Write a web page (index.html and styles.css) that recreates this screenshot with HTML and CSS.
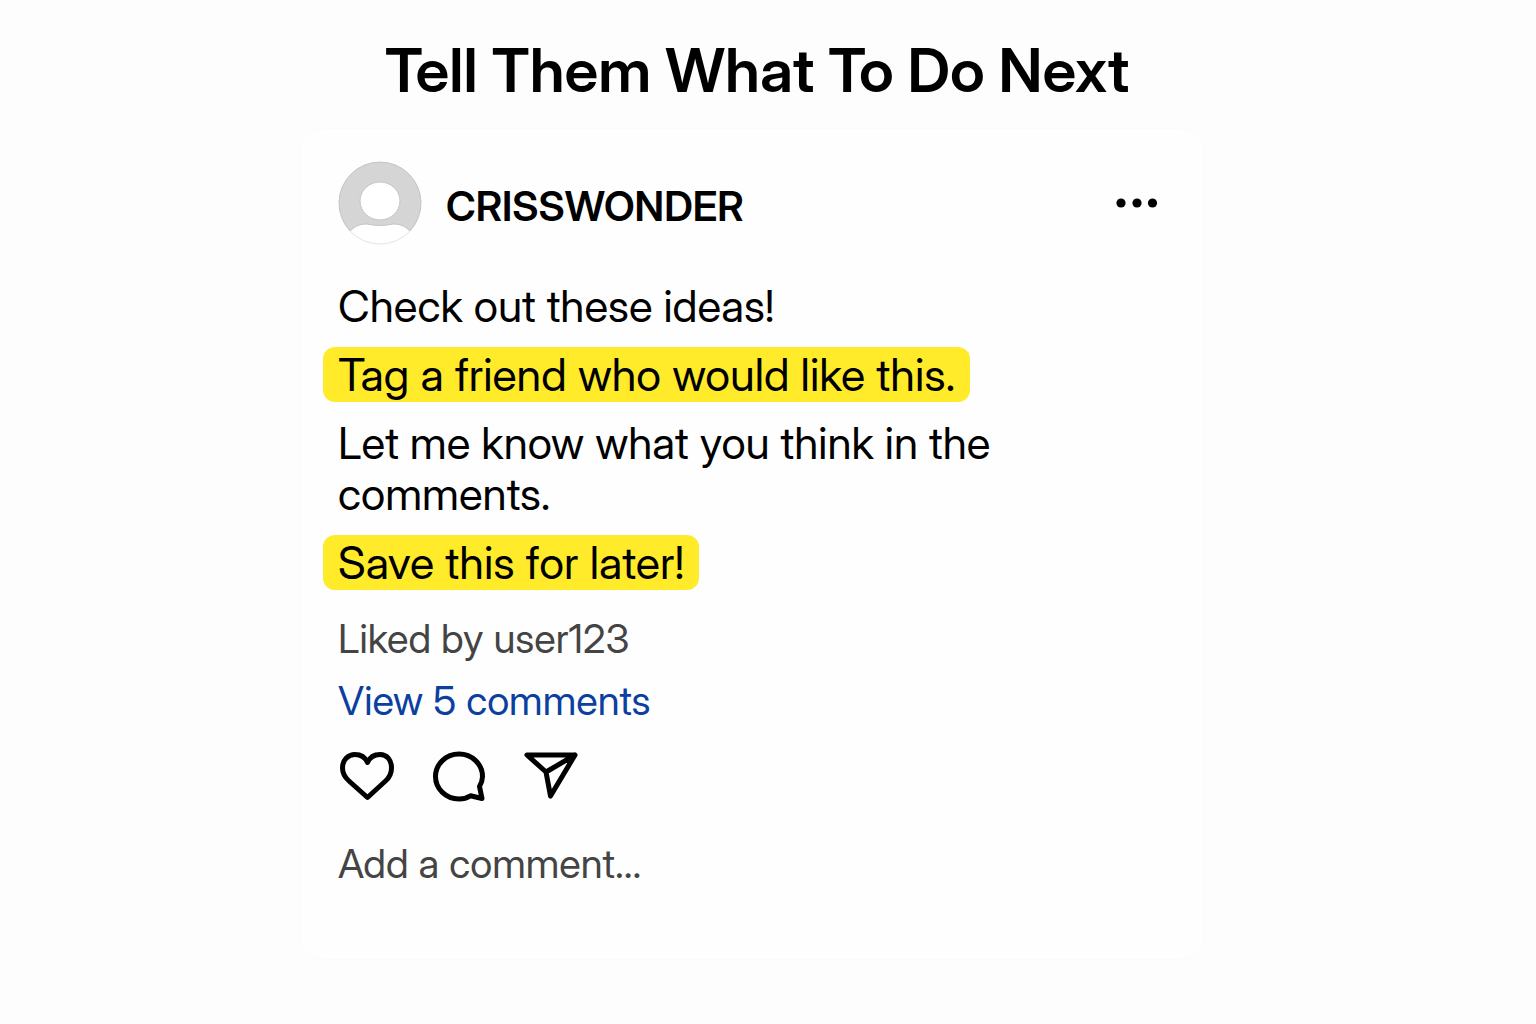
FILE: index.html
```html
<!DOCTYPE html>
<html lang="en">
<head>
<meta charset="utf-8">
<meta name="viewport" content="width=device-width, initial-scale=1">
<title>Tell Them What To Do Next</title>
<link rel="stylesheet" href="styles.css">
</head>
<body>
<main class="page">
  <h1 class="title">Tell Them What To Do Next</h1>
  <article class="post">
    <header class="post-header">
      <svg class="avatar" viewBox="0 0 84 84" aria-hidden="true">
        <defs><clipPath id="disc"><circle cx="42" cy="42" r="41"/></clipPath></defs>
        <circle cx="42" cy="42" r="41" fill="#d5d5d5"/>
        <g clip-path="url(#disc)" fill="#fff" stroke="#c4c4c4">
          <ellipse cx="42" cy="40" rx="20" ry="19"/>
          <path d="M8 76C14 66 20 63 29 63C38 65 46 65 55 63C64 63 70 66 76 76V86H8Z"/>
        </g>
        <path d="M12 70A41 41 0 1 1 72 70" fill="none" stroke="#c4c4c4"/>
        <path d="M12 70A41 41 0 0 0 72 70" fill="none" stroke="#e6e6e6"/>
      </svg>
      <h2 class="username">CRISSWONDER</h2>
      <button class="icon-button more" type="button" aria-label="More options">
        <svg width="42" height="12" viewBox="0 0 42 12"><circle cx="5" cy="6" r="4.600"/><circle cx="21" cy="6" r="4.600"/><circle cx="36.500" cy="6" r="4.600"/></svg>
      </button>
    </header>
    <div class="caption">
      <p>Check out these ideas!</p>
      <p><mark class="highlight">Tag a friend who would like this.</mark></p>
      <p>Let me know what you think in the comments.</p>
      <p><mark class="highlight">Save this for later!</mark></p>
    </div>
    <div class="meta">
      <p class="likes">Liked by user123</p>
      <a class="comments-link" href="#comment">View 5 comments</a>
    </div>
    <div class="actions">
      <button class="icon-button" type="button" aria-label="Like">
        <svg width="56" height="52" viewBox="0 0 56 52"><path d="M29.500 47.500L11 31C6.500 27 4.500 23 4.500 18C4.500 10 10 4.500 17 4.500C23 4.500 27.500 8 29.500 12.500C31.500 8 36 4.500 42 4.500C49 4.500 53.500 10 53.500 18C53.500 23 52 27 47.500 31Z"/></svg>
      </button>
      <button class="icon-button" type="button" aria-label="Comment">
        <svg width="56" height="52" viewBox="0 0 56 52"><path d="M49.500 36.500C51.500 33 52.500 30 52.500 26.500A23.500 22.500 0 1 0 29 49C33.500 49 37 48 40.500 45.800L52 48.500Z"/></svg>
      </button>
      <button class="icon-button" type="button" aria-label="Share">
        <svg width="56" height="52" viewBox="0 0 56 52"><path d="M5 5H53L28.500 46L24 22ZM24 22L53 5"/></svg>
      </button>
    </div>
    <input class="comment-input" id="comment" type="text" placeholder="Add a comment..." aria-label="Add a comment">
  </article>
</main>
</body>
</html>
```

FILE: styles.css
```css
* { box-sizing: border-box; }
body { margin: 0; background: #fdfdfd; color: #000; font-family: "Inter Display", Inter, "Liberation Sans", sans-serif; }
h1, h2, p { margin: 0; }
.page { display: flex; flex-direction: column; align-items: center; padding: 34px 24px 68px; }
.title { font-size: 61px; line-height: 72px; font-weight: 600; margin: 0 22px 22px 0; }
.post { width: 100%; max-width: 906px; margin-right: 32px; padding: 32px 46px 72px 38px; background: #fefefe; border: 1px solid #fbfbfb; border-radius: 24px; }
.post-header { display: flex; align-items: center; gap: 24px; }
.avatar { width: 84px; height: 84px; }
.username { font-size: 41px; line-height: 48px; font-weight: 600; padding-top: 6px; }
.icon-button { display: flex; padding: 0; border: 0; background: none; cursor: pointer; }
.more { margin-left: auto; }
.caption { display: flex; flex-direction: column; gap: 17px; max-width: 680px; margin-top: 36px; font-size: 44px; line-height: 51px; }
.highlight { display: inline-block; margin: -2px -15px; padding: 2px 15px; border-radius: 12px; background: #ffeb29; color: inherit; font-size: 45px; }
.meta { font-size: 40px; line-height: 46px; margin-top: 27px; }
.likes { color: #444; }
.comments-link { display: inline-block; margin-top: 16px; color: #0b3fa0; text-decoration: none; }
.actions { display: flex; gap: 36px; margin-top: 26px; }
.actions path { fill: none; stroke: #000; stroke-width: 5; stroke-linejoin: round; stroke-linecap: round; }
.comment-input { width: 100%; height: 48px; margin-top: 37px; padding: 0; border: 0; background: none; font: inherit; font-size: 40px; color: #444; }
.comment-input::placeholder { color: #444; opacity: 1; }
```
